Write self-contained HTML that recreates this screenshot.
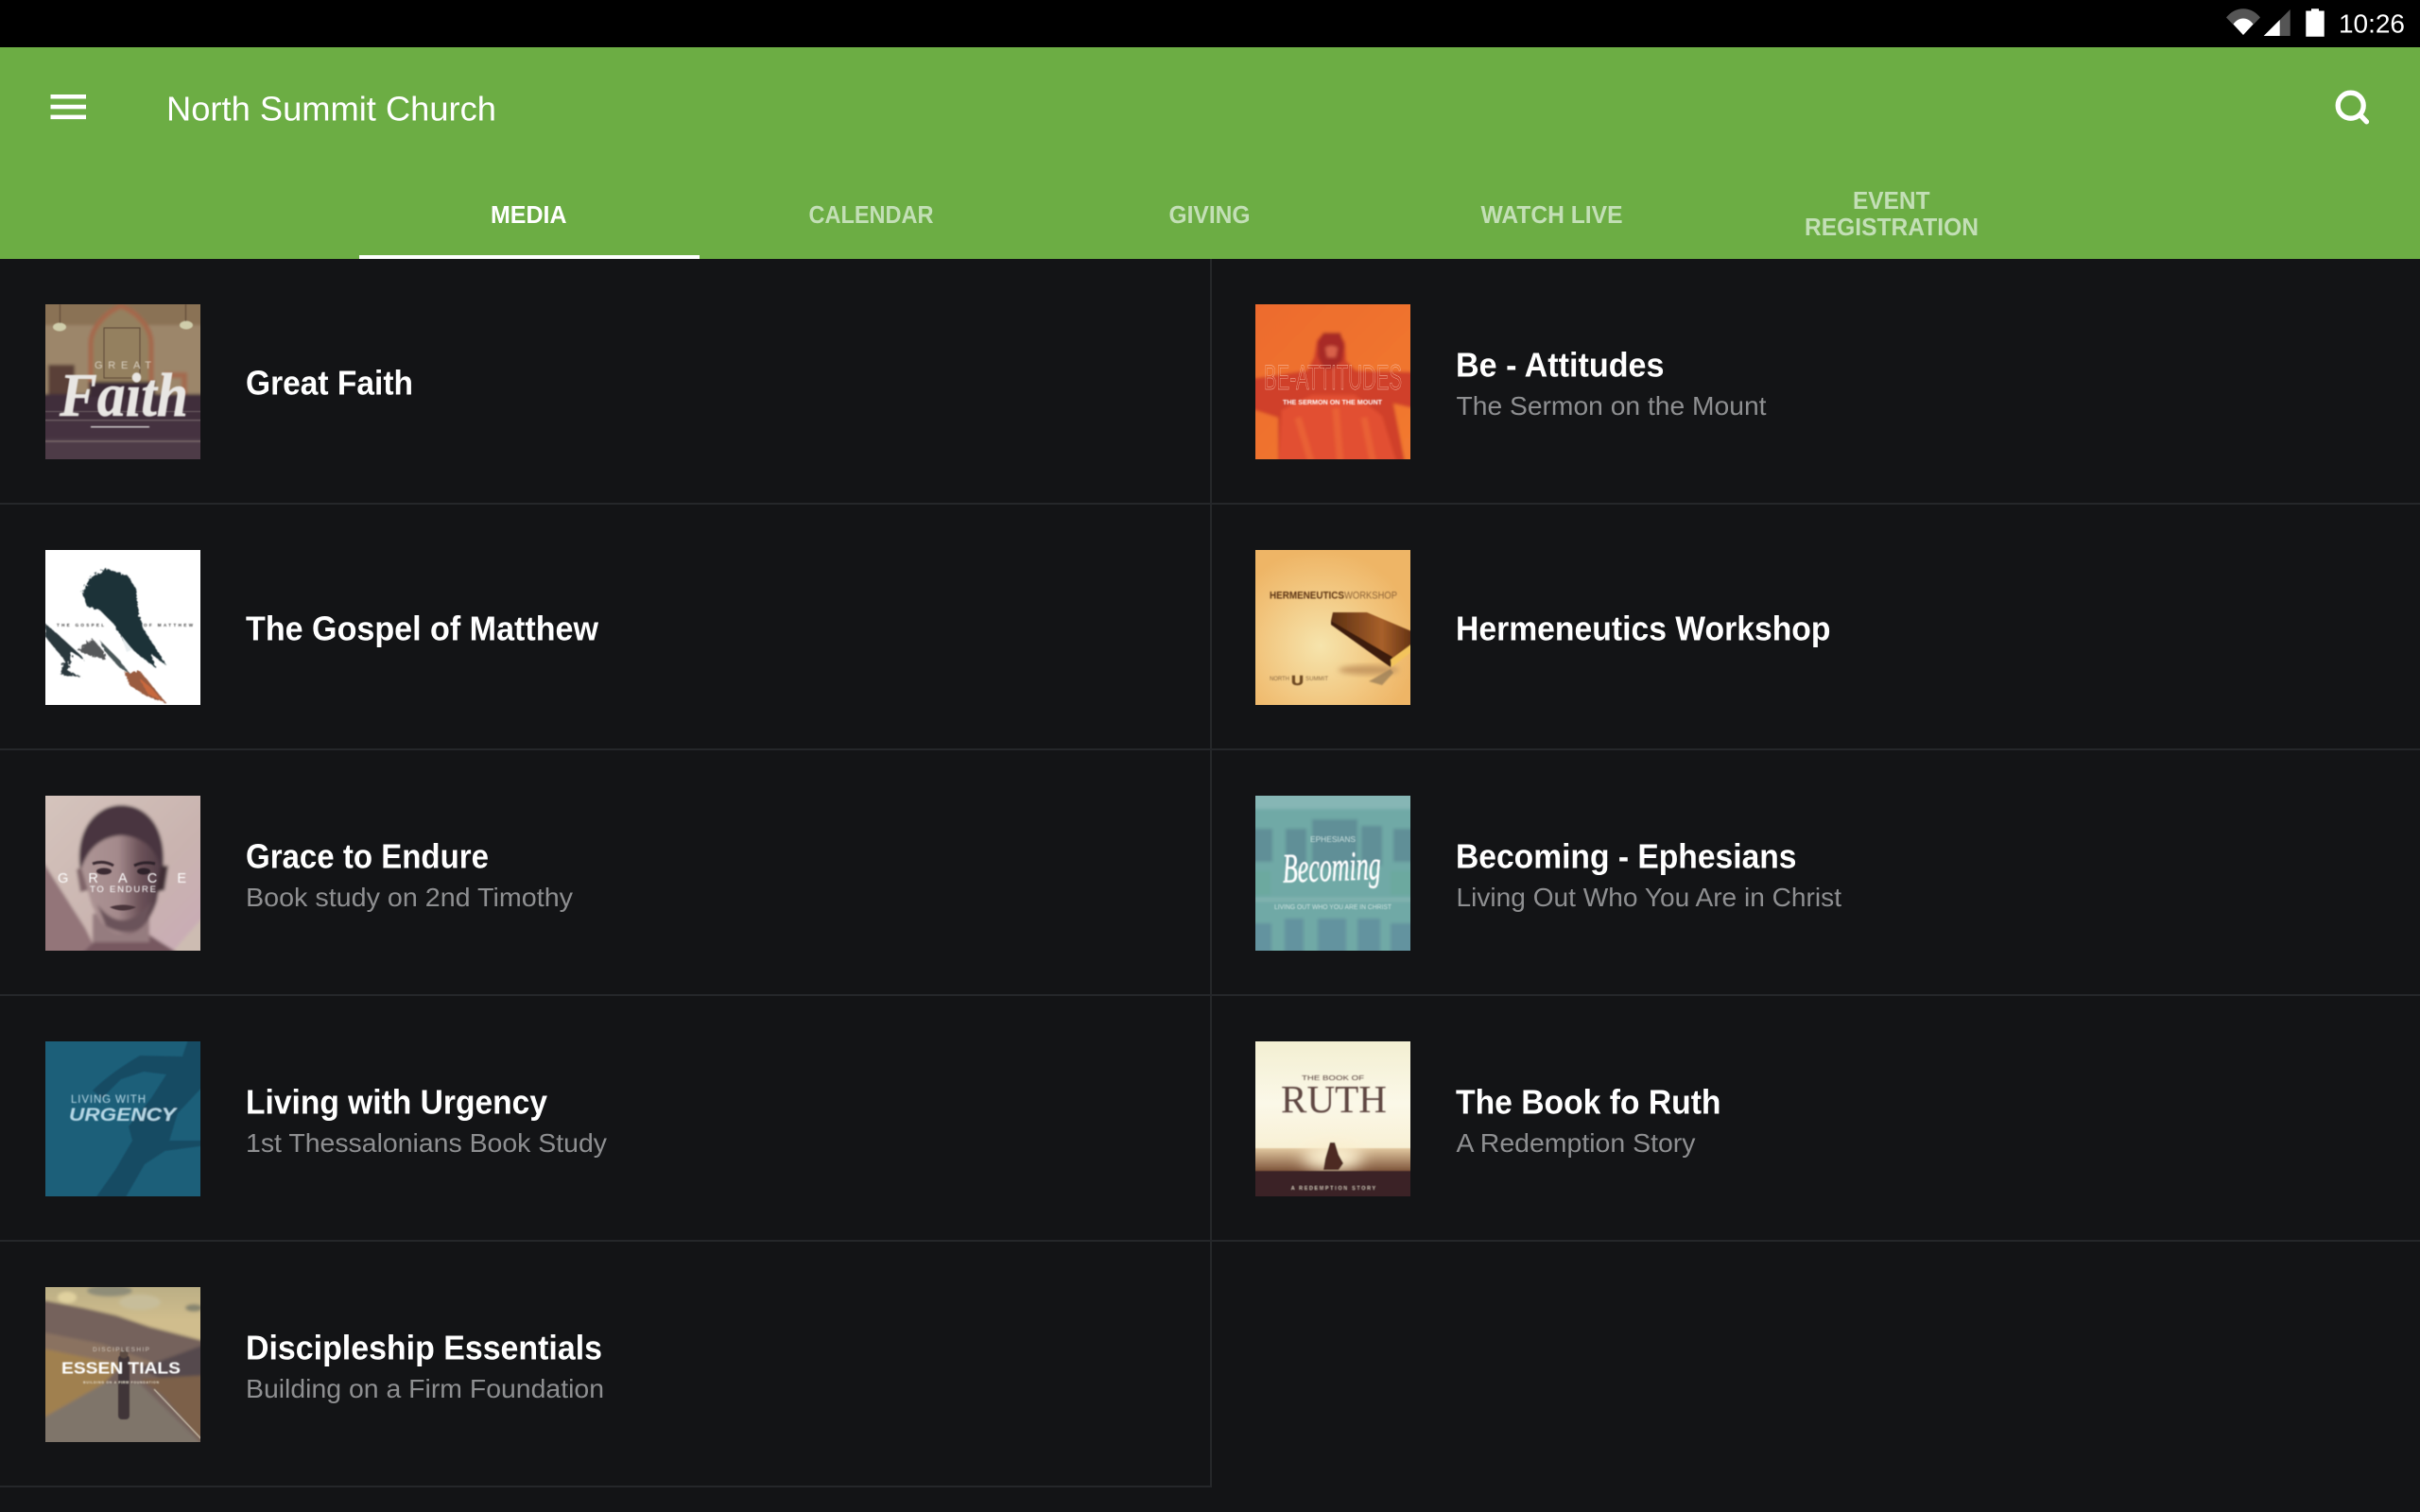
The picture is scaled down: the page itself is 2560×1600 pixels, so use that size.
<!DOCTYPE html>
<html><head><meta charset="utf-8"><title>North Summit Church</title>
<style>
html,body{margin:0;padding:0;background:#131416;width:2560px;height:1600px;overflow:hidden}
svg{display:block}
text{font-family:"Liberation Sans",sans-serif}
.t{font-size:36px;font-weight:700;fill:#fff}
.s{font-size:28px;fill:#8e8f91}
.tab{font-size:26px;font-weight:700;fill:#c3dfb6}
.se{font-family:"Liberation Serif",serif}
</style></head><body>
<svg xmlns="http://www.w3.org/2000/svg" width="2560" height="1600" viewBox="0 0 2560 1600">
<defs>
<filter id="b" x="-5%" y="-5%" width="110%" height="110%"><feGaussianBlur stdDeviation="0.5"/></filter>
<filter id="b2" x="-5%" y="-5%" width="110%" height="110%"><feGaussianBlur stdDeviation="1.6"/></filter>
<filter id="b3" x="-30%" y="-30%" width="160%" height="160%"><feGaussianBlur stdDeviation="3"/></filter>
<filter id="b8" x="-50%" y="-50%" width="200%" height="200%"><feGaussianBlur stdDeviation="8"/></filter>
<filter id="rough" x="-10%" y="-10%" width="120%" height="120%"><feTurbulence type="fractalNoise" baseFrequency="0.35" numOctaves="2" seed="4"/><feDisplacementMap in="SourceGraphic" scale="7"/><feGaussianBlur stdDeviation="0.45"/></filter>
<linearGradient id="g3" x1="0" y1="0" x2="1" y2="1"><stop offset="0" stop-color="#d6c6be"/><stop offset=".6" stop-color="#c9b3af"/><stop offset="1" stop-color="#c9a9b8"/></linearGradient>
<linearGradient id="gf" x1="0" y1="0" x2="1" y2="0"><stop offset="0" stop-color="#ad9595"/><stop offset=".45" stop-color="#a48a8c"/><stop offset=".72" stop-color="#6c5259"/><stop offset="1" stop-color="#4f3b45"/></linearGradient>
<linearGradient id="g5" x1="0" y1="0" x2="0" y2="1"><stop offset="0" stop-color="#b4aa83"/><stop offset=".25" stop-color="#d0bd8d"/></linearGradient>
<linearGradient id="g6" x1="0" y1="0" x2="1" y2="1"><stop offset="0" stop-color="#ec6a2e"/><stop offset="1" stop-color="#f37b30"/></linearGradient>
<linearGradient id="gb" x1="0" y1="0" x2="1" y2="0"><stop offset="0" stop-color="#5c3012"/><stop offset=".6" stop-color="#a8602a"/><stop offset="1" stop-color="#5a2c10"/></linearGradient>
<radialGradient id="g7" cx=".42" cy=".62" r=".62"><stop offset="0" stop-color="#f6e4ac"/><stop offset=".7" stop-color="#f1c279"/><stop offset="1" stop-color="#eeb566"/></radialGradient>
<linearGradient id="g9" x1="0" y1="0" x2="0" y2="1"><stop offset="0" stop-color="#f3efd2"/><stop offset=".4" stop-color="#fbf8e8"/><stop offset=".7" stop-color="#f8f0d4"/></linearGradient>
<linearGradient id="g9b" x1="0" y1="0" x2="0" y2="1"><stop offset="0" stop-color="#e2c8a0"/><stop offset="1" stop-color="#7b5138"/></linearGradient>
</defs>

<rect width="2560" height="1600" fill="#131416"/>
<rect width="2560" height="50" fill="#000"/>
<rect y="50" width="2560" height="224" fill="#6cad44"/>
<rect x="380" y="270" width="360" height="4" fill="#fff"/>

<!-- status icons -->
<path d="M2355 18.5C2360 12.5 2366 9.3 2373 9.3C2380 9.3 2386 12.5 2391 18.5L2373 37Z" fill="#555"/>
<path d="M2362.5 25.5C2365.5 21.5 2369 19.5 2373 19.5C2377 19.5 2380.5 21.5 2383.5 25.5L2373 37Z" fill="#fff"/>
<path d="M2394.7 38L2422.7 10V38Z" fill="#555"/>
<path d="M2394.7 38L2411.7 21V38Z" fill="#fff"/>
<path d="M2445 11.5V9.3H2453V11.5H2458.7V38.7H2439.3V11.5Z" fill="#fff"/>
<text x="2474" y="34.7" font-size="28" fill="#fff" textLength="70" lengthAdjust="spacingAndGlyphs">10:26</text>

<!-- toolbar -->
<rect x="53.500" y="100" width="37.500" height="4.500" fill="#fff"/>
<rect x="53.500" y="110.800" width="37.500" height="4.500" fill="#fff"/>
<rect x="53.500" y="121.600" width="37.500" height="4.500" fill="#fff"/>
<text x="176" y="127.700" font-size="36" fill="#fff" textLength="349" lengthAdjust="spacingAndGlyphs">North Summit Church</text>
<circle cx="2486.700" cy="111.700" r="13.500" fill="none" stroke="#fff" stroke-width="5.300"/>
<path d="M2497.500 122.500L2503.500 128.800" stroke="#fff" stroke-width="5.300" stroke-linecap="round"/>

<text x="519" y="236" style="fill:#fff" class="tab" textLength="80.500" lengthAdjust="spacingAndGlyphs">MEDIA</text>
<text x="855.500" y="236" class="tab" textLength="132" lengthAdjust="spacingAndGlyphs">CALENDAR</text>
<text x="1236.500" y="236" class="tab" textLength="86" lengthAdjust="spacingAndGlyphs">GIVING</text>
<text x="1566.500" y="236" class="tab" textLength="150" lengthAdjust="spacingAndGlyphs">WATCH LIVE</text>
<text x="1960" y="221" class="tab" textLength="81.500" lengthAdjust="spacingAndGlyphs">EVENT</text>
<text x="1909" y="249" class="tab" textLength="184" lengthAdjust="spacingAndGlyphs">REGISTRATION</text>

<!-- dividers -->
<g fill="#25272a">
<rect x="0" y="532" width="2560" height="2"/>
<rect x="0" y="792" width="2560" height="2"/>
<rect x="0" y="1052" width="2560" height="2"/>
<rect x="0" y="1312" width="2560" height="2"/>
<rect x="0" y="1572" width="1282" height="2"/>
<rect x="1280" y="274" width="2" height="1300"/>
</g>

<!-- text -->
<text class="t" x="260" y="417.500" textLength="177" lengthAdjust="spacingAndGlyphs">Great Faith</text>
<text class="t" x="260" y="677.500" textLength="373" lengthAdjust="spacingAndGlyphs">The Gospel of Matthew</text>
<text class="t" x="260" y="918.500" textLength="257" lengthAdjust="spacingAndGlyphs">Grace to Endure</text>
<text class="s" x="260" y="959" textLength="346" lengthAdjust="spacingAndGlyphs">Book study on 2nd Timothy</text>
<text class="t" x="260" y="1178.500" textLength="319" lengthAdjust="spacingAndGlyphs">Living with Urgency</text>
<text class="s" x="260" y="1219" textLength="382" lengthAdjust="spacingAndGlyphs">1st Thessalonians Book Study</text>
<text class="t" x="260" y="1438.500" textLength="377" lengthAdjust="spacingAndGlyphs">Discipleship Essentials</text>
<text class="s" x="260" y="1479" textLength="379" lengthAdjust="spacingAndGlyphs">Building on a Firm Foundation</text>

<text class="t" x="1540" y="398.500" textLength="220.500" lengthAdjust="spacingAndGlyphs">Be - Attitudes</text>
<text class="s" x="1540.500" y="439" textLength="328" lengthAdjust="spacingAndGlyphs">The Sermon on the Mount</text>
<text class="t" x="1540" y="677.500" textLength="396.500" lengthAdjust="spacingAndGlyphs">Hermeneutics Workshop</text>
<text class="t" x="1540" y="918.500" textLength="360.500" lengthAdjust="spacingAndGlyphs">Becoming - Ephesians</text>
<text class="s" x="1540.500" y="959" textLength="407.500" lengthAdjust="spacingAndGlyphs">Living Out Who You Are in Christ</text>
<text class="t" x="1540" y="1178.500" textLength="280.500" lengthAdjust="spacingAndGlyphs">The Book fo Ruth</text>
<text class="s" x="1540.500" y="1219" textLength="253" lengthAdjust="spacingAndGlyphs">A Redemption Story</text>

<!-- Great Faith -->
<svg x="48" y="322" width="164" height="164" viewBox="0 0 164 164">
<g filter="url(#b2)">
<rect x="-12" y="-12" width="188" height="188" fill="#9c866a"/>
<rect x="-12" y="-12" width="188" height="34" fill="#8a7254"/>
<path d="M48 90V42C48 24 65 8 80 2C96 8 112 24 112 42V90" fill="#94805f" stroke="#a5684c" stroke-width="5"/>
<rect x="3" y="64" width="28" height="36" fill="#5a4038"/>
<path d="M125 72H150V100H125Z" fill="#a36b50"/><rect x="130" y="78" width="14" height="22" fill="#9c866a"/>
<rect x="-12" y="95" width="188" height="81" fill="#3f2f3b"/>
<rect x="46" y="82" width="70" height="16" fill="#3a2a34"/>
<rect x="-12" y="142" width="188" height="34" fill="#4d3a47"/>
<rect x="-12" y="124" width="188" height="18" fill="#443340"/>
</g>
<g filter="url(#b)">
<rect x="62" y="25" width="38" height="53" fill="none" stroke="#5d4634" stroke-width="1"/>
<ellipse cx="15" cy="24" rx="7" ry="4.500" fill="#cfcdab"/><ellipse cx="149" cy="22" rx="7" ry="4.500" fill="#cfcdab"/>
<rect x="15" y="0" width="1" height="20" fill="#5d4634"/><rect x="148" y="0" width="1" height="18" fill="#5d4634"/>
<g fill="#6e5e64"><rect x="-8" y="113" width="180" height="1"/><rect x="-8" y="122" width="180" height="1.500"/><rect x="-8" y="144" width="180" height="2"/></g>
<rect x="48" y="129" width="62" height="1.500" fill="#cfc9cb"/>
<text x="52" y="68" font-size="11" fill="#d8cfc0" textLength="60">GREAT</text>
<text class="se" x="15" y="118" font-size="66" font-style="italic" font-weight="700" fill="#e8e6e3" stroke="#e8e6e3" stroke-width=".6" textLength="136" lengthAdjust="spacingAndGlyphs">Faith</text>
</g></svg>

<!-- Gospel of Matthew -->
<svg x="48" y="582" width="164" height="164" viewBox="0 0 164 164">
<rect width="164" height="164" fill="#fff"/>
<g filter="url(#rough)">
<path d="M39 45L48 28L66 20L88 28L96 42L98 66L104 84L118 106L128 122L112 110L116 124L100 112L84 98L72 78L58 64L44 60Z" fill="#1f3238"/>
<path d="M0 78L14 90L38 112L40 116L28 108L24 128L38 134L16 132L20 116L0 92Z" fill="#2b383d"/>
<path d="M34 106L50 94L62 108L64 116L48 112Z" fill="#56585a"/>
<path d="M58 96L78 116L90 132L78 124L62 106Z" fill="#4a5659"/>
</g>
<g filter="url(#rough)">
<path d="M84 130L100 128L118 150L128 162L106 154L90 144Z" fill="#9a5c40"/>
<path d="M100 136L112 146L124 160L108 152Z" fill="#c8683c"/>
</g>
<path d="M80 90L92 105L86 108Z" fill="#e8eef0" filter="url(#b)"/>
<g filter="url(#b)">
<text x="12" y="81" font-size="4.500" font-weight="700" fill="#333" textLength="50">THE GOSPEL</text>
<text x="104" y="81" font-size="4.500" font-weight="700" fill="#333" textLength="52">OF MATTHEW</text>
</g></svg>

<!-- Grace -->
<svg x="48" y="842" width="164" height="164" viewBox="0 0 164 164">
<g filter="url(#b2)">
<rect x="-12" y="-12" width="188" height="188" fill="url(#g3)"/>
<path d="M-12 55L42 140L60 176H-12Z" fill="#937579"/>
<path d="M125 176L176 118V176Z" fill="#cdbcb2"/>
<path d="M30 176L60 146H108L155 176Z" fill="#775960"/>
<path d="M50 125H110V155H50Z" fill="#957b7f"/>
<path d="M38 75C38 40 58 28 82 28C106 28 124 45 124 78L118 112Q106 146 84 147Q60 146 48 112Z" fill="url(#gf)"/>
<path d="M37 80C30 35 55 10 80 10C108 10 130 35 124 82C118 58 106 44 82 42C60 42 44 56 37 80Z" fill="#4a3640"/>
<path d="M38 76L33 78L37 102L45 100Z" fill="#7e6468"/><path d="M122 74L130 74L126 100L116 102Z" fill="#3f2d36"/>
<path d="M55 115Q82 150 112 112L104 138Q84 150 64 138Z" fill="#6b535a"/>
</g>
<g filter="url(#b)">
<path d="M50 72Q62 68 72 74" stroke="#3a2b32" stroke-width="3" fill="none"/><path d="M94 74Q104 69 116 72" stroke="#2f2229" stroke-width="3" fill="none"/>
<ellipse cx="62" cy="80" rx="8" ry="3.500" fill="#3a2b32"/><ellipse cx="104" cy="80" rx="7" ry="3.500" fill="#2f2229"/>
<path d="M68 118Q82 113 96 118Q82 125 68 118Z" fill="#4a343b"/>
<text x="13" y="92" font-size="14.500" fill="#fff" textLength="136" lengthAdjust="spacing">GRACE</text>
<text x="47" y="102" font-size="9.500" fill="#fff" textLength="70">TO ENDURE</text>
</g></svg>

<!-- Urgency -->
<svg x="48" y="1102" width="164" height="164" viewBox="0 0 164 164">
<rect width="164" height="164" fill="#1c5f79"/>
<g filter="url(#b)">
<path d="M50 52C62 40 78 28 100 15L145 16L152 -5H170V44L140 76L128 115L105 130L82 170H50L74 136L92 105L88 90L112 60L128 35L104 32L80 40L60 60Z" fill="#174b63"/>
<path d="M126 105H170V110L126 116Z" fill="#174b63"/>
<text x="27" y="65" font-size="11.500" fill="#b7d8e6" textLength="79">LIVING WITH</text>
<text x="25" y="84" font-size="19" font-weight="700" font-style="italic" fill="#b7d8e6" textLength="113" lengthAdjust="spacingAndGlyphs">URGENCY</text>
</g></svg>

<!-- Essentials -->
<svg x="48" y="1362" width="164" height="164" viewBox="0 0 164 164">
<g filter="url(#b2)">
<rect x="-12" y="-12" width="188" height="188" fill="url(#g5)"/>
<ellipse cx="23" cy="11" rx="10" ry="6" fill="#e0d19f"/><ellipse cx="68" cy="4" rx="24" ry="6" fill="#8f8d78"/><ellipse cx="100" cy="16" rx="22" ry="8" fill="#c7bd9a"/><ellipse cx="157" cy="22" rx="9" ry="4" fill="#87856f"/>
<path d="M-12 12L40 22L75 30L110 42L176 59V176H-12Z" fill="#75625c"/>
<path d="M-12 46L60 60L120 82H-12Z" fill="#8a7260"/>
<path d="M-12 63L80 82L60 105L-12 146Z" fill="#a08050"/>
<path d="M100 86L176 58V93L128 100Z" fill="#54494d"/>
<path d="M100 97L176 93V176L125 115Z" fill="#7c6048"/>
<path d="M-12 144L62 102H100L176 176H-12Z" fill="#7f746b"/>
</g>
<g filter="url(#b)">
<path d="M115 108L170 166" stroke="#d3cbb8" stroke-width="1.200"/>
<rect x="77" y="72" width="12" height="68" rx="4" fill="#3f3639"/><circle cx="83" cy="71" r="4.500" fill="#5c4b43"/>
<text x="50" y="68" font-size="6.500" fill="#cfc6bc" textLength="60">DISCIPLESHIP</text>
<text x="17" y="91.500" font-size="17.500" font-weight="700" fill="#fff" textLength="126" lengthAdjust="spacingAndGlyphs">ESSEN TIALS</text>
<text x="40" y="102" font-size="3.500" font-weight="700" fill="#e8e0d0" textLength="80">BUILDING ON A FIRM FOUNDATION</text>
</g></svg>

<!-- Be-Attitudes -->
<svg x="1328" y="322" width="164" height="164" viewBox="0 0 164 164">
<g filter="url(#b2)">
<rect x="-12" y="-12" width="188" height="188" fill="url(#g6)"/>
<path d="M-12 80L55 70L62 56L65 38L72 30H88L95 40L96 60L106 70L176 72V112L146 105L160 176H24L24 120L-12 108Z" fill="#d04029"/>
<path d="M66 40L72 30H90L94 44L92 60L82 68H72L66 55Z" fill="#a82c28"/>
<path d="M74 46Q80 42 87 46L85 56H76Z" fill="#d8604a"/>
<path d="M28 112L60 96L105 96L134 118L152 176H24Z" fill="#e25030"/>
<path d="M45 120L60 170M85 110L90 170M115 120L125 170" stroke="#ee6c3a" stroke-width="7" opacity=".6"/>
</g>
<g>
<text x="9" y="90" font-size="37" fill="none" stroke="#f9c2ae" stroke-width=".45" textLength="146" lengthAdjust="spacingAndGlyphs">BE-ATTITUDES</text>
<text x="29" y="106" font-size="7" font-weight="700" fill="#fff" textLength="105" lengthAdjust="spacingAndGlyphs" filter="url(#b)">THE SERMON ON THE MOUNT</text>
</g></svg>

<!-- Hermeneutics -->
<svg x="1328" y="582" width="164" height="164" viewBox="0 0 164 164">
<rect width="164" height="164" fill="url(#g7)"/>
<g filter="url(#b)">
<ellipse cx="120" cy="127" rx="32" ry="5" fill="#c79a62" filter="url(#b3)"/>
<path d="M143 126L120 139L134 143L146 130Z" fill="#9c7f58" opacity=".8" filter="url(#b)"/>
<path d="M82 66L118 66L170 88V100L143 116L80 75Z" fill="url(#gb)"/>
<path d="M80 75L145 113L143 124L80 79Z" fill="#3d1d0d"/>
<path d="M143 116L170 96V104L144 124Z" fill="#f3c45c"/>
<text x="15" y="51.500" font-size="11" font-weight="700" fill="#5d3415" textLength="79" lengthAdjust="spacingAndGlyphs">HERMENEUTICS</text>
<text x="94" y="51.500" font-size="11" fill="#8e6438" textLength="56" lengthAdjust="spacingAndGlyphs">WORKSHOP</text>
<text x="15" y="138" font-size="6" fill="#8c6a42" textLength="21">NORTH</text>
<text x="38" y="143" font-size="15" font-weight="700" fill="#6e4a24" stroke="#6e4a24" stroke-width=".5" textLength="13" lengthAdjust="spacingAndGlyphs">U</text>
<text x="53" y="138" font-size="6" fill="#8c6a42" textLength="24">SUMMIT</text>
</g></svg>

<!-- Becoming -->
<svg x="1328" y="842" width="164" height="164" viewBox="0 0 164 164">
<g filter="url(#b2)">
<rect x="-12" y="-12" width="188" height="188" fill="#70a9a6"/>
<rect x="-12" y="-12" width="188" height="26" fill="#86b6b5"/>
<g fill="#608f97"><rect x="-8" y="35" width="26" height="35"/><rect x="32" y="35" width="22" height="40"/><rect x="60" y="25" width="48" height="50"/><rect x="112" y="32" width="22" height="42"/><rect x="146" y="35" width="26" height="35"/></g>
<g fill="#63939f"><rect x="-8" y="135" width="25" height="38"/><rect x="31" y="130" width="20" height="44"/><rect x="66" y="130" width="30" height="44"/><rect x="108" y="130" width="24" height="44"/><rect x="143" y="135" width="28" height="38"/></g>
<g fill="#6ca99f"><rect x="-8" y="80" width="24" height="25"/><rect x="143" y="80" width="28" height="25"/></g>
<rect x="-12" y="108" width="188" height="4" fill="#82b3b0"/>
</g>
<g filter="url(#b)">
<text x="58" y="49" font-size="8.500" fill="#cbe0de" textLength="48" lengthAdjust="spacingAndGlyphs">EPHESIANS</text>
<text class="se" x="29" y="90" font-size="44" font-style="italic" fill="#fff" stroke="#fff" stroke-width=".5" textLength="104" lengthAdjust="spacingAndGlyphs" transform="rotate(-2 80 85)">Becoming</text>
<text x="20" y="120" font-size="7" fill="#cfe3e1" textLength="124" lengthAdjust="spacingAndGlyphs">LIVING OUT WHO YOU ARE IN CHRIST</text>
</g></svg>

<!-- Ruth -->
<svg x="1328" y="1102" width="164" height="164" viewBox="0 0 164 164">
<rect width="164" height="164" fill="url(#g9)"/>
<g filter="url(#b)">
<rect x="-8" y="113" width="180" height="25" fill="url(#g9b)"/>
<ellipse cx="82" cy="122" rx="32" ry="14" fill="#fbefcf" filter="url(#b8)"/>
<rect x="-8" y="137" width="180" height="35" fill="#3b2028"/>
<path d="M72 136L74 124L79 107L84 107L88 120L93 129L88 136Z" fill="#4d2b20"/>
<text x="49" y="41" font-size="7.500" fill="#5a4440" textLength="66" lengthAdjust="spacingAndGlyphs">THE BOOK OF</text>
<text class="se" x="27" y="75" font-size="41" fill="#5e4642" textLength="112" lengthAdjust="spacingAndGlyphs">RUTH</text>
<text x="38" y="157" font-size="5" fill="#e6d8c8" textLength="89">A REDEMPTION STORY</text>
</g></svg>
</svg>
</body></html>
